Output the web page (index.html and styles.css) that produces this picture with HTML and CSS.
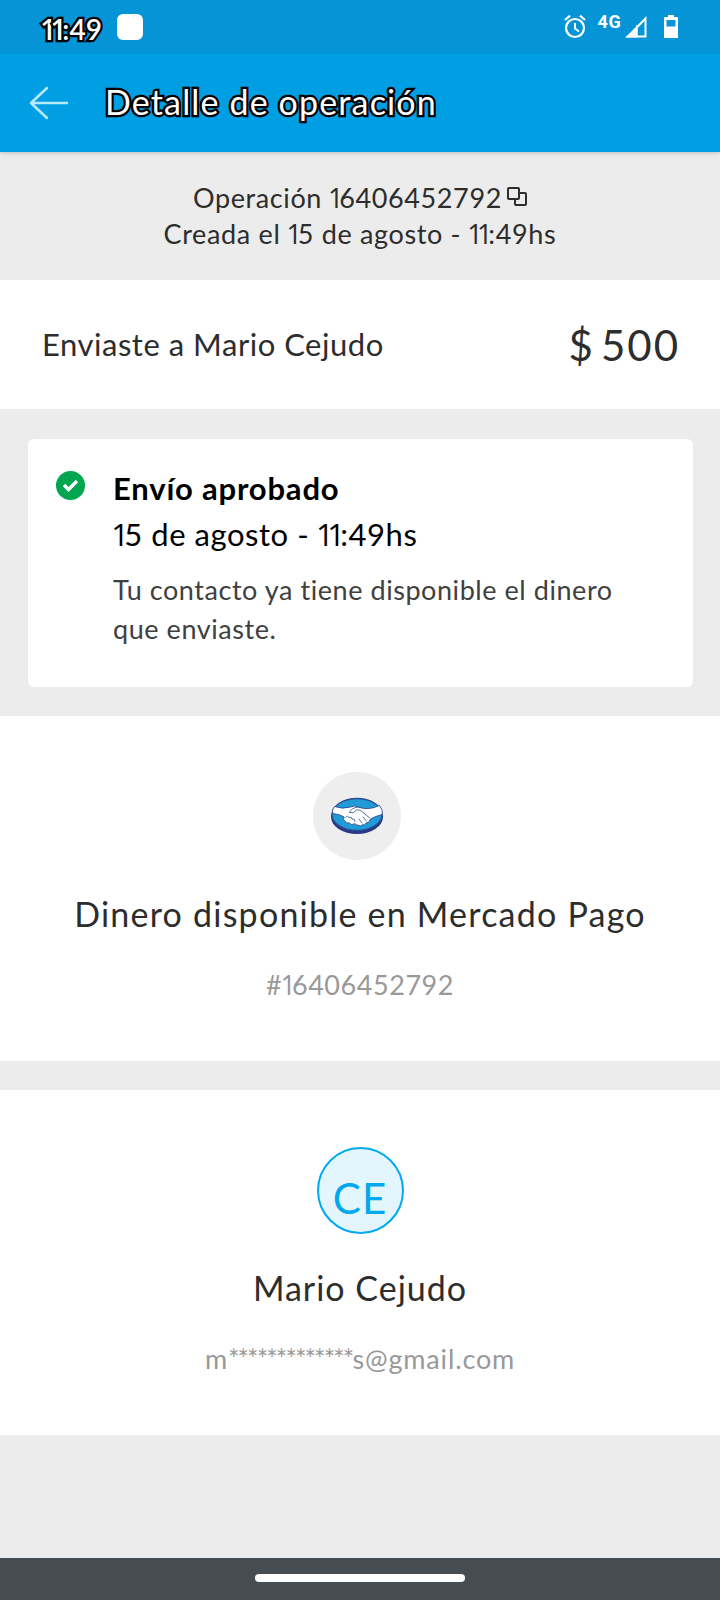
FILE: index.html
```html
<!DOCTYPE html>
<html lang="es">
<head>
<meta charset="utf-8">
<title>Detalle de operación</title>
<link rel="stylesheet" href="styles.css">
</head>
<body>
<div class="screen">
  <div class="status">
    <span class="clock"><span class="one">1</span><span class="one">1</span>:49</span>
    <span class="notice"></span>
    <svg class="status-icons" width="118" height="28" viewBox="0 0 118 28" fill="none" stroke="#fff">
      <circle cx="11" cy="15" r="9" stroke-width="2.2"/>
      <path d="M11 10v5.5l4 3" stroke-width="2"/>
      <path d="M1 7l5-4.3M21 7l-5-4.3" stroke-width="2.2"/>
      <text class="network" x="33.500" y="15">4G</text>
      <path d="M81.500 5.500V23.500H64z" stroke-width="2"/>
      <path d="M73 14v10.500H61z" fill="#fff" stroke="none"/>
      <path d="M73 12v12" stroke-width="1.500"/>
      <path fill="#fff" stroke="none" fill-rule="evenodd" d="M104 2h6v2h3q1 0 1 1v20H100V5q0-1 1-1h3zM102.500 7v6.500h9V7z"/>
    </svg>
  </div>
  <header class="header">
    <svg class="back" width="40" height="36" viewBox="0 0 40 36" fill="none" stroke="#b5eaff" stroke-width="2.500" stroke-linecap="round" stroke-linejoin="round"><path d="M18 3L2 18l16 15M2 18h36"/></svg>
    <h1 class="title">Detalle de operación</h1>
  </header>
  <section class="info">
    <div class="line op">Operación <span class="one">1</span>6406452792<svg class="copy" width="20" height="19" viewBox="0 0 20 19" fill="none" stroke="#2d2d2d" stroke-width="2"><rect x="1" y="1" width="11" height="11" rx="1"/><path d="M12 6h6q1 0 1 1v10q0 1-1 1H9q-1 0-1-1v-5"/></svg></div>
    <div class="line created">Creada el <span class="one">1</span>5 de agosto - <span class="one">1</span><span class="one">1</span>:49hs</div>
  </section>
  <section class="summary">
    <span class="sent">Enviaste a Mario Cejudo</span>
    <span class="amount"><span class="currency">$</span>500</span>
  </section>
  <section class="card-area">
    <div class="card">
      <svg class="check" width="29" height="29" viewBox="0 0 29 29"><circle cx="14.500" cy="14.500" r="14.500" fill="#00a650"/><path d="M8 14l4.500 4.500 8.500-8.500" fill="none" stroke="#fff" stroke-width="3.400"/></svg>
      <div>
        <h2 class="state">Envío aprobado</h2>
        <div class="date"><span class="one">1</span>5 de agosto - <span class="one">1</span><span class="one">1</span>:49hs</div>
        <p class="detail">Tu contacto ya tiene disponible el dinero<br>que enviaste.</p>
      </div>
    </div>
  </section>
  <section class="party">
    <div class="logo">
      <svg width="54" height="38" viewBox="0 0 54 38">
        <ellipse cx="27" cy="20" rx="26" ry="17" fill="#283a86"/>
        <ellipse cx="27" cy="17.500" rx="25" ry="16" fill="#209bd8" stroke="#2c4c91" stroke-width="1.300"/>
        <path d="M4.500 9.500q8 3 16 .5 4-2 8 .2 10 3.500 21-1.700 4 5 2.700 9-7 1.500-12 5-1 4-4 3.300-1 3-4 2-2 2.500-4 .2-2 1-3-1.300-4 2-6-.7-4 .5-4-2-3-1-1-4-5-3-11.500-3.500Q1.500 13 4.500 9.500z" fill="#fff" stroke="#2c4c91" stroke-width=".9"/>
        <path d="M28 10q-7 1-8.500 5.500 4 1.500 7-2.500 3-.7 5 1.200l8.500 7M33 20l3.500 4M29 22l3 4M16 20q2-2 3 .5 3-1 3 1.500 3-.5 3 2.500" fill="none" stroke="#2c4c91" stroke-width=".8" stroke-linecap="round"/>
      </svg>
    </div>
    <h3 class="name funds">Dinero disponible en Mercado Pago</h3>
    <div class="sub ref">#<span class="one">1</span>6406452792</div>
  </section>
  <section class="party second">
    <div class="avatar">CE</div>
    <h3 class="name">Mario Cejudo</h3>
    <div class="sub mail">m<span class="mask">*************</span>s@gmail.com</div>
  </section>
  <div class="rest"></div>
  <div class="nav"><span class="handle"></span></div>
</div>
</body>
</html>
```
FILE: styles.css
```css
* { box-sizing: border-box; }
body { margin: 0; background: #ececec; font-family: Lato, "Liberation Sans", sans-serif; color: #2d2d2d; }
h1, h2, h3, p { margin: 0; font-weight: 400; }
svg { flex: none; }
.screen { width: 720px; height: 1600px; display: flex; flex-direction: column; overflow: hidden; }
.screen > * { flex: none; }
.one { margin-left: -0.06em; font-family: "Open Sans", sans-serif; line-height: 1; letter-spacing: -0.15em; }

.status { height: 54px; background: #0594d6; display: flex; align-items: flex-start; padding-left: 42px; }
.clock, .title { color: #fff; -webkit-text-stroke: 4.6px #000; paint-order: stroke fill; stroke-linejoin: round; }
.clock { width: 75px; margin-top: 11px; font-size: 28px; line-height: 36px; font-weight: 600; letter-spacing: 0; white-space: nowrap; }
.notice { width: 26px; height: 26px; margin-top: 14px; border-radius: 6px; background: #fff; }
.status-icons { margin: 13px 0 0 421px; }
.network { font: 700 18px Roboto, sans-serif; fill: #fff; stroke: none; letter-spacing: .6px; }

.header { height: 98px; background: #009ee3; display: flex; align-items: center; padding-left: 29px; box-shadow: 0 1px 4px rgba(0,0,0,.2); z-index: 1; clip-path: inset(0 0 -8px 0); }
.title { margin: 0 0 3px 36px; font-size: 34px; line-height: 44px; letter-spacing: 1.15px; }
.back { margin-top: 0; }

.info { height: 128px; padding-top: 28px; text-align: center; }
.line { font-size: 27px; line-height: 36px; white-space: nowrap; }
.op { letter-spacing: .6px; }
.created { letter-spacing: .65px; }
.copy { margin-left: 5px; vertical-align: 2px; }

.summary { height: 129px; background: #fff; display: flex; align-items: center; justify-content: space-between; padding: 0 40px 0 42px; }
.sent { font-size: 31px; line-height: 40px; padding-bottom: 2px; letter-spacing: .52px; }
.amount { font-size: 42px; line-height: 50px; padding-top: 1px; letter-spacing: 2px; }
.currency { margin-right: 6px; }

.card-area { padding: 30px 27px 29px 28px; }
.card { height: 248px; background: #fff; border-radius: 6px; padding: 27px 0 0 28px; display: flex; align-items: flex-start; gap: 28px; }
.check { margin-top: 5px; }
.state { color: #000; font-size: 31px; line-height: 45px; font-weight: 700; letter-spacing: .8px; }
.date { color: #000; font-size: 31px; line-height: 46px; letter-spacing: .55px; }
.detail { margin-top: 13px; color: #404040; font-size: 27px; line-height: 39px; letter-spacing: .56px; }

.party { height: 345px; background: #fff; display: flex; flex-direction: column; align-items: center; padding-top: 56px; }
.second { margin-top: 29px; padding-top: 57px; }
.logo { width: 88px; height: 88px; margin-right: 6px; border-radius: 50%; background: #eee; display: flex; align-items: center; justify-content: center; }
.name { margin-top: 32px; font-size: 34px; line-height: 44px; letter-spacing: 1px; }
.funds { letter-spacing: 1.22px; }
.sub { margin-top: 31px; color: #999; font-size: 27px; line-height: 36px; white-space: nowrap; }
.ref { letter-spacing: .55px; }
.mail { letter-spacing: .85px; }
.mask { letter-spacing: -1.9px; }
.avatar { width: 87px; height: 87px; border: 2.5px solid #00aaf0; border-radius: 50%; background: #e3f6fe; color: #00a8ee; font-size: 42px; line-height: 98px; text-align: center; letter-spacing: 1px; }

.rest { height: 123px; }
.nav { height: 42px; background: #454d52; display: flex; justify-content: center; padding-top: 16px; }
.handle { width: 210px; height: 8px; border-radius: 4px; background: #fff; }
```
